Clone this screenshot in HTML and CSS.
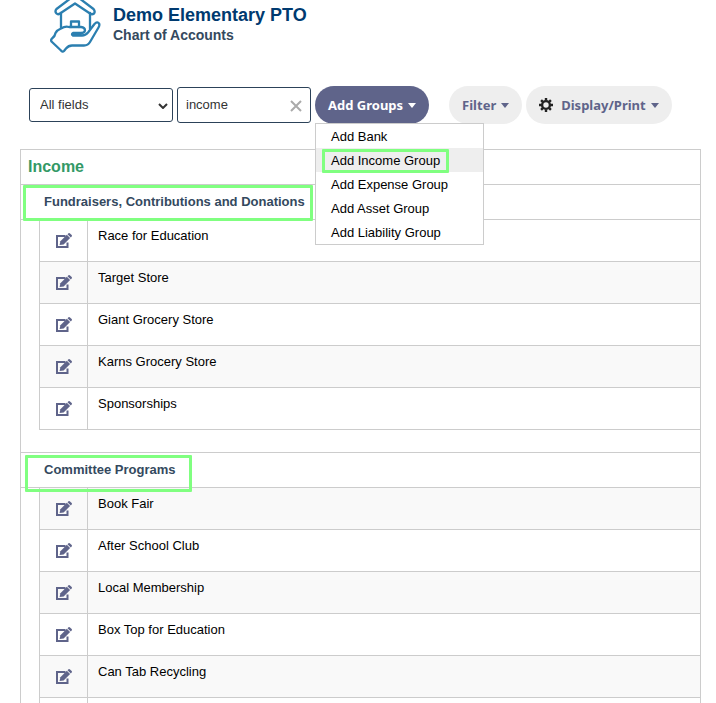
FILE: index.html
```
<!DOCTYPE html>
<html lang="en">
<head>
  <meta charset="UTF-8" />
  <meta name="viewport" content="width=device-width, initial-scale=1.0"/>
  <title>Chart of Accounts</title>
  <link rel="stylesheet" href="styles.css">
</head>
<body>

<!-- Edit icon shared by all account rows -->
<svg class="sprite" aria-hidden="true">
  <symbol id="edit" viewBox="0 0 18 16">
    <path d="M10.500 3H2V14H12.500V9.500" fill="none" stroke="#5f648a" stroke-width="2"/>
    <path d="M4.600 12L5.400 8.200L11.800 1.800L15.100 5.100L8.600 11.400Z" fill="#5f648a"/>
    <path d="M12.500 1.200L13.500 0.300Q14.300 -0.200 15 0.400L16.700 2.100Q17.200 2.800 16.700 3.500L15.800 4.500Z" fill="#5f648a"/>
  </symbol>
</svg>

<header class="page-header">
  <svg class="logo" viewBox="0 0 56 54" fill="none" stroke="#2b7fb0" stroke-width="2.300" stroke-linejoin="round" stroke-linecap="round">
    <path d="M14 13V28M43 13V29"/>
    <path d="M28 -5L9.500 9Q7.500 11.500 9.500 13.500Q11 15 13 13.500L28 3.500L43 13.500Q45 15 47 13.500Q48.500 11.500 46.500 9Z"/>
    <path d="M24 27V21.500H32V27"/>
    <path d="M14 28.500Q18 26 22 27H34Q38 27.500 38 30.500Q37.500 33 34 33H26Q24 34 26 35.500H35Q38.500 35.500 41 32.500L47.500 24Q50.500 21 52 23.500Q53 25 51.500 27.500L43 42Q41 45.500 37 45.500H25Q21.500 45.500 19 48.500L17 51Q15.500 52.500 14 50.500L4.500 41.500Q3.500 40 5 38.500Q8 36.500 8.500 33Q10 30 14 28.500Z"/>
  </svg>
  <div class="titles">
    <h1>Demo Elementary PTO</h1>
    <h2>Chart of Accounts</h2>
  </div>
</header>

<div class="toolbar">
  <div class="select-wrap">
    <select class="field-select" aria-label="Search field">
      <option>All fields</option>
    </select>
    <svg class="chevron" viewBox="0 0 10 6"><path d="M1 1L5 5L9 1" fill="none" stroke="#333" stroke-width="2"/></svg>
  </div>
  <div class="search">
    <input type="text" class="search-input" value="income" aria-label="Search">
    <button class="clear-btn" aria-label="Clear">
      <svg viewBox="0 0 12 12"><path d="M1 1L11 11M11 1L1 11" stroke="#aaa" stroke-width="2"/></svg>
    </button>
  </div>
  <div class="dropdown">
    <button class="pill pill-primary">Add Groups <span class="caret"></span></button>
    <div class="menu">
      <button class="menu-item">Add Bank</button>
      <button class="menu-item active"><span class="mark mark-menu"></span>Add Income Group</button>
      <button class="menu-item">Add Expense Group</button>
      <button class="menu-item">Add Asset Group</button>
      <button class="menu-item">Add Liability Group</button>
    </div>
  </div>
  <button class="pill pill-filter">Filter <span class="caret"></span></button>
  <button class="pill">
    <svg class="gear" viewBox="0 0 14 14">
      <circle cx="7" cy="7" r="3.900" fill="none" stroke="#222" stroke-width="2.400"/>
      <path d="M7 0V2.500M7 11.500V14M0 7H2.500M11.500 7H14M2.100 2.100L3.800 3.800M10.200 10.200L11.900 11.900M2.100 11.900L3.800 10.200M10.200 3.800L11.900 2.100" stroke="#222" stroke-width="2.400"/>
    </svg>
    Display/Print <span class="caret"></span>
  </button>
</div>

<table class="accounts">
  <colgroup>
    <col class="col-indent">
    <col class="col-edit">
    <col>
  </colgroup>
  <tbody>
    <tr class="type-row"><th colspan="3">Income</th></tr>

    <tr class="group-row"><th colspan="3"><span class="mark mark-first"></span>Fundraisers, Contributions and Donations</th></tr>
    <tr class="item"><td></td><td><button class="edit-btn" aria-label="Edit"><svg><use href="#edit"/></svg></button></td><td>Race for Education</td></tr>
    <tr class="item alt"><td></td><td><button class="edit-btn" aria-label="Edit"><svg><use href="#edit"/></svg></button></td><td>Target Store</td></tr>
    <tr class="item"><td></td><td><button class="edit-btn" aria-label="Edit"><svg><use href="#edit"/></svg></button></td><td>Giant Grocery Store</td></tr>
    <tr class="item alt"><td></td><td><button class="edit-btn" aria-label="Edit"><svg><use href="#edit"/></svg></button></td><td>Karns Grocery Store</td></tr>
    <tr class="item"><td></td><td><button class="edit-btn" aria-label="Edit"><svg><use href="#edit"/></svg></button></td><td>Sponsorships</td></tr>
    <tr class="spacer"><td colspan="3"></td></tr>

    <tr class="group-row"><th colspan="3"><span class="mark mark-second"></span>Committee Programs</th></tr>
    <tr class="item alt"><td></td><td><button class="edit-btn" aria-label="Edit"><svg><use href="#edit"/></svg></button></td><td>Book Fair</td></tr>
    <tr class="item"><td></td><td><button class="edit-btn" aria-label="Edit"><svg><use href="#edit"/></svg></button></td><td>After School Club</td></tr>
    <tr class="item alt"><td></td><td><button class="edit-btn" aria-label="Edit"><svg><use href="#edit"/></svg></button></td><td>Local Membership</td></tr>
    <tr class="item"><td></td><td><button class="edit-btn" aria-label="Edit"><svg><use href="#edit"/></svg></button></td><td>Box Top for Education</td></tr>
    <tr class="item alt"><td></td><td><button class="edit-btn" aria-label="Edit"><svg><use href="#edit"/></svg></button></td><td>Can Tab Recycling</td></tr>
    <tr class="tail"><td></td><td></td><td></td></tr>
  </tbody>
</table>

</body>
</html>
```
FILE: styles.css
```
* {
  box-sizing: border-box;
}

body {
  margin: 0;
  padding: 0 15px 0 20px;
  background: white;
  color: #000;
  font-family: "Liberation Sans", Arial, sans-serif;
  font-size: 13px;
}

button, input, select {
  font-family: inherit;
  font-size: 13px;
}

button {
  border: none;
  padding: 0;
  background: none;
  color: #000;
  cursor: pointer;
}

.sprite {
  display: none;
}

/* Header */
.page-header {
  display: flex;
  gap: 10px;
  height: 86px;
  padding-left: 27px;
}

.logo {
  width: 56px;
  height: 54px;
}

.titles {
  padding-top: 4px;
}

h1 {
  margin: 0;
  font-size: 18px;
  line-height: 22px;
  color: #003a70;
}

h2 {
  margin: 0;
  font-size: 14px;
  line-height: 18px;
  color: #34495e;
}

/* Toolbar */
.toolbar {
  display: flex;
  align-items: center;
  gap: 4px;
  height: 38px;
  padding-left: 9px;
}

.select-wrap, .search, .dropdown {
  position: relative;
}

.field-select {
  display: block;
  width: 144px;
  height: 34px;
  padding: 0 10px 2px;
  border: 1px solid #2c4259;
  border-radius: 3px;
  background: white;
  color: #333;
  appearance: none;
}

.chevron {
  position: absolute;
  right: 5px;
  top: 15px;
  width: 10px;
  height: 6px;
}

.search-input {
  display: block;
  width: 134px;
  height: 36px;
  padding: 0 30px 2px 8px;
  border: 1px solid #2c4259;
  border-radius: 3px;
  color: #333;
}

.clear-btn {
  position: absolute;
  right: 9px;
  top: 13px;
  width: 12px;
  height: 12px;
}

.clear-btn svg {
  display: block;
}

.pill {
  display: flex;
  align-items: center;
  height: 38px;
  padding: 0 13px;
  border-radius: 19px;
  background: #eee;
  color: #5f648a;
  font-family: "Noto Sans", "Open Sans", sans-serif;
  font-weight: bold;
  white-space: nowrap;
}

.pill-primary {
  background: #5f648a;
  color: white;
}

.pill-filter {
  margin-left: 16px;
}

.caret {
  margin-left: 5px;
  border-top: 5px solid;
  border-left: 4px solid transparent;
  border-right: 4px solid transparent;
}

.gear {
  width: 14px;
  height: 14px;
  margin-right: 8px;
}

.menu {
  position: absolute;
  left: 0;
  top: 37px;
  z-index: 2;
  width: 169px;
  border: 1px solid #ccc;
  background: white;
}

.menu-item {
  position: relative;
  display: block;
  width: 100%;
  height: 24px;
  padding-left: 15px;
  text-align: left;
}

.menu-item.active {
  background: #eee;
}

/* Accounts table */
.accounts {
  width: 100%;
  margin-top: 25px;
  border-collapse: collapse;
  table-layout: fixed;
}

.col-indent {
  width: 19px;
}

.col-edit {
  width: 48px;
}

.accounts th, .accounts td {
  padding: 0;
  border: 1px solid #ccc;
  text-align: left;
}

.accounts .type-row th {
  height: 35px;
  padding-left: 7px;
  font-size: 16px;
  color: #339966;
}

.accounts .group-row th {
  position: relative;
  height: 35px;
  padding: 0 0 2px 23px;
  color: #34495e;
}

.item {
  height: 42px;
}

.accounts .item td {
  padding: 8px 10px;
  line-height: 16px;
  vertical-align: top;
}

.accounts .item td:first-child {
  padding: 0;
  border-top: none;
  border-bottom: none;
}

.accounts .item td:nth-child(2) {
  padding: 13px 15px 0;
}

.item.alt td:not(:first-child) {
  background: #f9f9f9;
}

.edit-btn {
  display: block;
  width: 18px;
  height: 16px;
}

.edit-btn svg {
  display: block;
  width: 18px;
  height: 16px;
}

.accounts .spacer td {
  height: 23px;
  border-top: none;
}

.accounts .tail td {
  height: 5px;
  border-bottom: none;
}

.accounts .tail td:first-child {
  border-top: none;
}

/* Green highlight frames */
.mark {
  position: absolute;
  z-index: 1;
  border: 3px solid #80ff80;
  border-radius: 1px;
  pointer-events: none;
}

.mark-menu {
  left: 6px;
  top: 1px;
  width: 127px;
  height: 24px;
}

.mark-first {
  left: 2px;
  top: 0;
  width: 290px;
  height: 36px;
}

.mark-second {
  left: 4px;
  top: 2px;
  width: 167px;
  height: 37px;
}
```
